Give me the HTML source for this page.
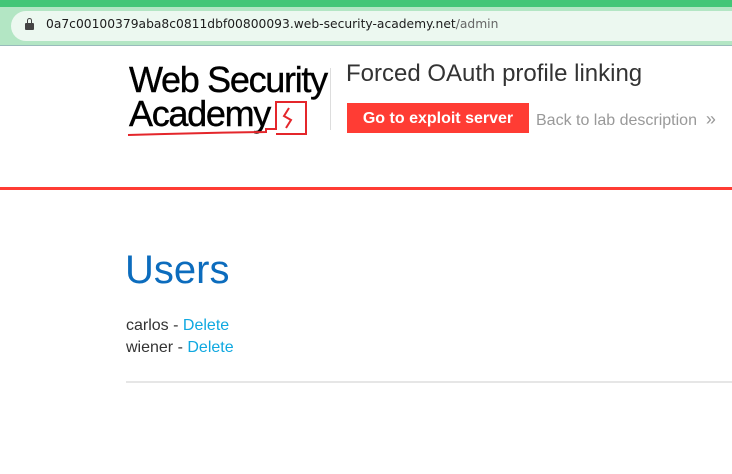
<!DOCTYPE html>
<html><head><style>
body{margin:0;width:732px;height:474px;overflow:hidden;background:#fff;font-family:"Liberation Sans",sans-serif;position:relative}
.top{position:absolute;left:0;top:0;width:732px;height:7px;background:#43c677}
.bar{position:absolute;left:0;top:7px;width:732px;height:38px;background:#b3e6c4;border-bottom:1px solid #9bb}
.pill{position:absolute;left:11px;top:4px;width:740px;height:30px;background:#ecf8f0;border-radius:15px}
.url{position:absolute;left:46px;top:10px;font-family:"DejaVu Sans",sans-serif;font-size:12.3px;color:#1c1c1c}
.url span{color:#666}
.lock{position:absolute;left:25px;top:16px;width:9px;height:7px;background:#444;border-radius:1px}
.lock:before{content:"";position:absolute;left:1.5px;top:-5px;width:3px;height:4px;border:1.5px solid #444;border-bottom:none;border-radius:3px 3px 0 0}
.logo{position:absolute;left:129px;top:63px;font-size:36px;line-height:34px;color:#000;letter-spacing:-1.3px;-webkit-text-stroke:0.4px #000}
.vline{position:absolute;left:330px;top:68px;width:1px;height:62px;background:#ddd}
h1{position:absolute;left:346px;top:60px;margin:0;font-weight:normal;font-size:24px;color:#333}
.btn{position:absolute;left:347px;top:103px;width:182px;height:30px;background:#ff3c34;color:#fff;font-weight:bold;font-size:16px;line-height:32px;text-align:center}
.back{position:absolute;left:536px;top:109px;font-size:16px;color:#999}
.red{position:absolute;left:0;top:187px;width:732px;height:3px;background:#ff3c34}
.users{position:absolute;left:125px;top:248px;font-size:40px;color:#0c6cbd}
.list{position:absolute;left:126px;top:315px;font-size:16px;line-height:22px;color:#333}
.list a{color:#0fa8e0;text-decoration:none}
.rule{position:absolute;left:126px;top:381px;width:606px;height:2px;background:#e6e6e6}
</style></head><body>
<div class="top"></div>
<div class="bar"><div class="pill"></div><div class="lock"></div><div class="url">0a7c00100379aba8c0811dbf00800093.web-security-academy.net<span>/admin</span></div></div>
<div class="logo">Web Security<br>Academy</div>
<svg style="position:absolute;left:126px;top:100px" width="184" height="40"><path d="M2 35 Q70 33 140 32 L140 29 L150 29 L150 2 L180 2 L180 34 L150 34" fill="none" stroke="#e4262b" stroke-width="2"/><path d="M163 8 L158 16 L165 20 L160 28" fill="none" stroke="#e4262b" stroke-width="2"/></svg>
<div class="vline"></div>
<h1>Forced OAuth profile linking</h1>
<div class="btn">Go to exploit server</div>
<div class="back">Back to lab description &nbsp;<span style="font-size:18px">»</span></div>
<div class="red"></div>
<div class="users">Users</div>
<div class="list">carlos - <a>Delete</a><br>wiener - <a>Delete</a></div>
<div class="rule"></div>
</body></html>
